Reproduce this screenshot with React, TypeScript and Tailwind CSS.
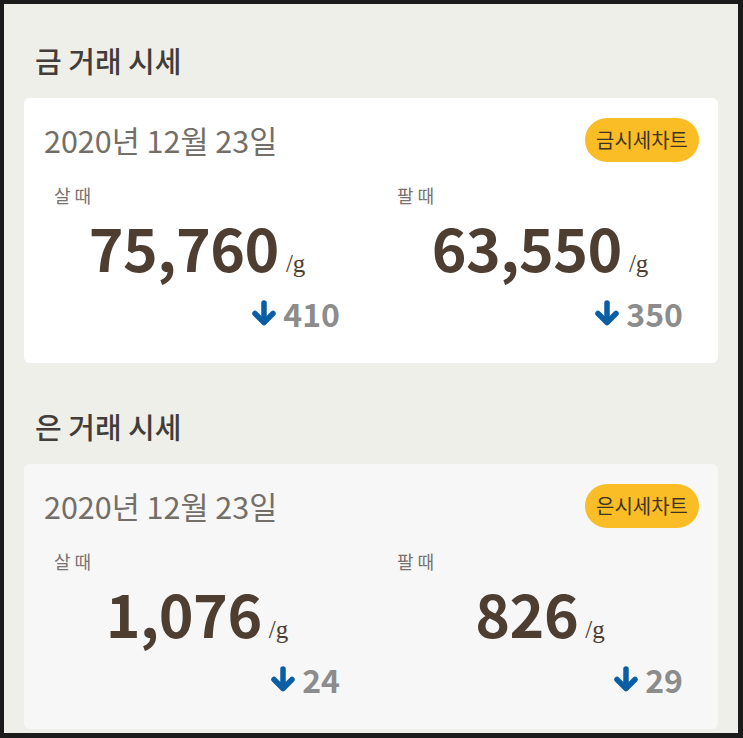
type Quote = { label: string; price: string; diff: string };

type Section = {
  title: string;
  date: string;
  chart: string;
  cardBg: string;
  buy: Quote;
  sell: Quote;
};

const SECTIONS: Section[] = [
  {
    title: '금 거래 시세',
    date: '2020년 12월 23일',
    chart: '금시세차트',
    cardBg: 'bg-white',
    buy: { label: '살 때', price: '75,760', diff: '410' },
    sell: { label: '팔 때', price: '63,550', diff: '350' },
  },
  {
    title: '은 거래 시세',
    date: '2020년 12월 23일',
    chart: '은시세차트',
    cardBg: 'bg-[#f7f7f7]',
    buy: { label: '살 때', price: '1,076', diff: '24' },
    sell: { label: '팔 때', price: '826', diff: '29' },
  },
];

function DownArrow() {
  return (
    <svg viewBox="0 0 26 26" className="w-[26px] h-[26px] text-[#0a5ea6]" fill="none">
      <path d="M13 3v19" stroke="currentColor" strokeWidth="5.5" strokeLinecap="round" />
      <path d="M4 13.5l9 9 9-9" stroke="currentColor" strokeWidth="5.5" strokeLinecap="round" strokeLinejoin="round" />
    </svg>
  );
}

function PriceColumn({ quote }: { quote: Quote }) {
  return (
    <div className="w-[286px] flex flex-col">
      <p className="text-[18px] leading-[26px] text-[#777370]">{quote.label}</p>
      <div className="mt-[9px] flex items-baseline justify-center">
        <span className="text-[59px] leading-[60px] font-bold text-[#4e3e31] tracking-[-0.5px]">
          {quote.price}
        </span>
        <span className="ml-[7px] text-[25px] text-[#4e3e31] font-['Liberation_Serif',serif]">/g</span>
      </div>
      <div className="mt-[12px] flex items-center justify-end gap-[6px]">
        <DownArrow />
        <span className="text-[32px] leading-[36px] font-bold text-[#8c8c8c]">{quote.diff}</span>
      </div>
    </div>
  );
}

export default function App() {
  return (
    <div className="w-[743px] h-[738px] overflow-hidden border-t-[4px] border-l-[4px] border-r-[5px] border-b-[5px] border-[#1b1b1b] bg-[#efefea] font-['Noto_Sans_CJK_KR','Noto_Sans',sans-serif]">
      <div className="px-[20px] pt-[40px] flex flex-col gap-[47px]">
        {SECTIONS.map((s) => (
          <section key={s.title}>
            <h2 className="pl-[11px] text-[29px] leading-[32px] font-medium text-[#423d38]">{s.title}</h2>
            <div className={`mt-[22px] h-[265px] rounded-[6px] ${s.cardBg} pt-[20px] pl-[20px] pr-[19px]`}>
              <div className="flex items-center justify-between">
                <p className="text-[30.5px] leading-[44px] text-[#746e68]">{s.date}</p>
                <span className="h-[44px] px-[11px] rounded-full bg-[#fbbd25] flex items-center text-[20px] text-[#3f3321]">
                  {s.chart}
                </span>
              </div>
              <div className="mt-[20px] pl-[10px] flex gap-[57px]">
                <PriceColumn quote={s.buy} />
                <PriceColumn quote={s.sell} />
              </div>
            </div>
          </section>
        ))}
      </div>
    </div>
  );
}
